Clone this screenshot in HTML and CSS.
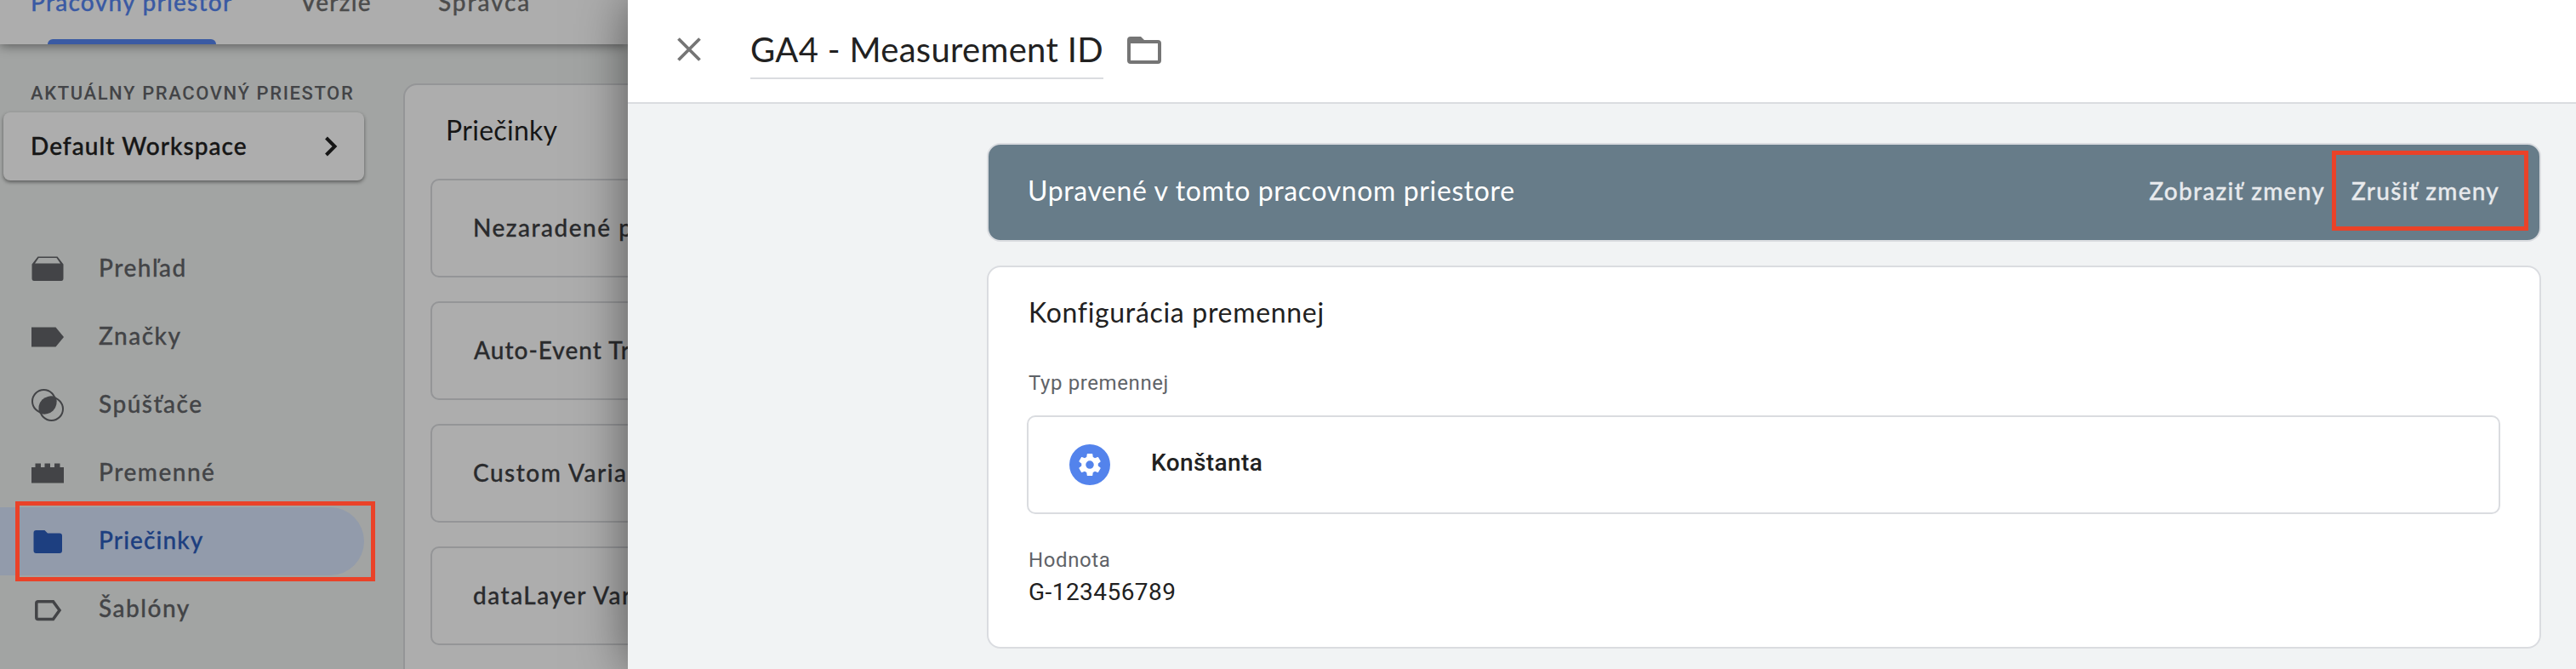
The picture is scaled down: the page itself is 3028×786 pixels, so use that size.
FILE: index.html
```html
<!DOCTYPE html>
<html lang="sk">
<head>
<meta charset="utf-8">
<title>GA4 - Measurement ID</title>
<link rel="stylesheet" href="styles.css">
</head>
<body>
<div class="app">
  <header class="tabs">
    <span class="tab tab-active">Pracovný priestor</span>
    <span class="tab">Verzie</span>
    <span class="tab tab-wide">Správca</span>
  </header>
  <div class="body">
    <aside class="side">
      <div class="side-label">AKTUÁLNY PRACOVNÝ PRIESTOR</div>
      <div class="workspace">
        <span>Default Workspace</span>
        <svg class="chevron" width="16" height="24" viewBox="0 0 16 24"><path d="M2.500 2 12.500 12 2.500 22" fill="none" stroke="#161616" stroke-width="4"/></svg>
      </div>
      <nav class="nav">
        <a class="nav-item"><svg class="nav-icon" viewBox="0 0 38 38"><path fill-rule="evenodd" d="M7.500 4.500H30.500L37.500 13.500V30Q37.500 33 35 33H3Q.5 33 .5 30V13.500ZM8.500 6 4 12.500H34L29.500 6Z"/></svg><span class="nav-text">Prehľad</span></a>
        <a class="nav-item"><svg class="nav-icon" viewBox="0 0 38 38"><path d="M0 7.500H28.500L38 19 28.500 30.500H0Z"/></svg><span class="nav-text">Značky</span></a>
        <a class="nav-item"><svg class="nav-icon" viewBox="0 0 38 38"><circle class="ring" cx="14.500" cy="14.500" r="13.500"/><circle class="ring" cx="23.500" cy="23.500" r="13.500"/><path d="M28.500 9.500A14.500 14.500 0 0 0 9.500 28.500A14.500 14.500 0 0 0 28.500 9.500Z"/></svg><span class="nav-text">Spúšťače</span></a>
        <a class="nav-item"><svg class="nav-icon" viewBox="0 0 38 38"><path d="M0 12H4.500V7.500H11V12H15.500V7.500H22V12H27V7.500H33.500V12H38V30.500H0Z"/></svg><span class="nav-text">Premenné</span></a>
        <a class="nav-item nav-active"><svg class="nav-icon" viewBox="0 0 38 38"><path d="M5.500 6H15.500L19 9.500H33Q36 9.500 36 12.500V30Q36 33 33 33H5.500Q2.500 33 2.500 30V9Q2.500 6 5.500 6Z"/></svg><span class="nav-text">Priečinky</span><span class="mark mark-nav"></span></a>
        <a class="nav-item"><svg class="nav-icon" viewBox="0 0 38 38"><path class="outline" d="M7.800 9.700H25.500L33 20 25.500 30.500H7.800Q5.800 30.500 5.800 28.500V11.700Q5.800 9.700 7.800 9.700Z"/></svg><span class="nav-text">Šablóny</span></a>
      </nav>
    </aside>
    <main class="folders">
      <h2 class="folders-title">Priečinky</h2>
      <div class="folder">Nezaradené položky</div>
      <div class="folder folder-snug">Auto-Event Tracking</div>
      <div class="folder">Custom Variables</div>
      <div class="folder">dataLayer Variables</div>
    </main>
  </div>
</div>
<section class="drawer">
  <header class="drawer-head">
    <svg class="close" width="28" height="28" viewBox="0 0 28 28"><path d="M1.500 1.500 26.500 26.500M26.500 1.500 1.500 26.500" stroke="#757575" stroke-width="3.800"/></svg>
    <div class="drawer-title">GA4 - Measurement ID</div>
    <svg class="folder-icon" width="40" height="32" viewBox="0 0 40 32"><path fill="#757575" fill-rule="evenodd" d="M4 0H16L20 4H36Q40 4 40 8V28Q40 32 36 32H4Q0 32 0 28V4Q0 0 4 0ZM4 8V28H36V8Z"/></svg>
  </header>
  <div class="drawer-body">
    <div class="banner">
      <span class="banner-text">Upravené v tomto pracovnom priestore</span>
      <span class="banner-link">Zobraziť zmeny</span>
      <span class="banner-link last">Zrušiť zmeny<span class="mark mark-cancel"></span></span>
    </div>
    <div class="card">
      <h3 class="card-title">Konfigurácia premennej</h3>
      <div class="field-label">Typ premennej</div>
      <div class="type-box">
        <svg class="gear" width="48" height="48" viewBox="0 0 48 48"><circle cx="24" cy="24" r="24" fill="#5383ec"/><path transform="translate(7.700 7.700) scale(1.360)" fill="#fff" d="M19.140 12.940c.04-.3.060-.61.060-.94 0-.32-.02-.64-.07-.94l2.030-1.580c.18-.14.230-.41.120-.61l-1.920-3.320c-.12-.22-.37-.29-.59-.22l-2.390.96c-.5-.38-1.030-.7-1.620-.94l-.36-2.540c-.04-.24-.24-.41-.48-.41h-3.840c-.24 0-.43.170-.47.410l-.36 2.540c-.59.240-1.130.570-1.620.940l-2.390-.96c-.22-.08-.47 0-.59.220L2.740 8.870c-.12.210-.08.470.120.610l2.030 1.580c-.05.300-.09.630-.09.940s.02.640.070.940l-2.030 1.580c-.18.140-.23.410-.12.610l1.920 3.320c.12.220.370.290.590.220l2.390-.96c.5.380 1.030.7 1.620.940l.36 2.540c.05.240.240.410.480.410h3.840c.24 0 .44-.17.470-.41l.36-2.540c.59-.24 1.130-.56 1.620-.94l2.390.96c.22.080.470 0 .59-.22l1.920-3.320c.12-.22.070-.47-.12-.61zM12 15.500a3.500 3.500 0 1 1 0-7 3.500 3.500 0 0 1 0 7z"/></svg>
        <span class="type-name">Konštanta</span>
      </div>
      <div class="field-label second">Hodnota</div>
      <div class="value">G-123456789</div>
    </div>
  </div>
</section>
</body>
</html>
```
FILE: styles.css
```css
* { box-sizing: border-box; }
body { margin: 0; width: 3028px; height: 786px; overflow: hidden; position: relative; font-family: Lato, "Open Sans", sans-serif; font-weight: 500; font-size: 28px; }
.app { width: 738px; height: 786px; overflow: hidden; background: #a2a4a3; display: flex; flex-direction: column; }
.tabs { height: 52px; flex: none; background: #adadad; display: flex; padding-left: 36px; position: relative; z-index: 1; box-shadow: 0 2px 12px rgba(0,0,0,.45); color: #4c4c4c; white-space: nowrap; letter-spacing: 1.250px; -webkit-text-stroke: .3px; }
.tab { height: 70px; margin-top: -18px; line-height: 40px; position: relative; }
.tab:nth-child(1) { width: 317px; }
.tab:nth-child(2) { width: 162px; }
.tab-wide { letter-spacing: 1.900px; }
.tab-active { color: #3a5aa3; }
.tab-active::after { content: ""; position: absolute; left: 20px; top: 64px; width: 198px; height: 6px; background: #3a5aa3; border-radius: 6px 6px 0 0; }
.body { flex: 1; display: flex; min-height: 0; }
.side { width: 474px; flex: none; padding-top: 45px; }
.side-label { height: 35px; padding-left: 36px; font: 500 22px/25px Roboto, sans-serif; letter-spacing: 1.600px; color: #434447; white-space: nowrap; }
.workspace { margin-left: 4px; width: 424px; height: 80px; padding: 0 31px 3px 32px; display: flex; align-items: center; justify-content: space-between; background: #adadad; border-radius: 8px; box-shadow: 0 2px 4px rgba(0,0,0,.45); color: #161616; white-space: nowrap; letter-spacing: 1.050px; -webkit-text-stroke: .4px; }
.chevron { margin-top: 3px; }
.nav { margin-top: 64px; }
.nav-item { height: 80px; width: 428px; padding-left: 37px; display: flex; align-items: center; color: #434447; position: relative; }
.nav-icon { width: 38px; height: 38px; margin-right: 41px; fill: #434447; }
.nav-text { padding-bottom: 4px; letter-spacing: 1.500px; -webkit-text-stroke: .3px; }
.ring { fill: none; stroke: #434447; stroke-width: 2; }
.outline { fill: none; stroke: #434447; stroke-width: 3.500; }
.nav-active { background: #929bab; color: #1d3f80; border-radius: 0 40px 40px 0; }
.nav-active .nav-icon { fill: #1d3f80; }
.nav-active .nav-text { letter-spacing: 1.100px; }
.mark { position: absolute; border: 5px solid #ea4228; }
.mark-nav { left: 18px; top: -7px; width: 423px; height: 94px; }
.folders { flex: none; width: 600px; margin-top: 46px; border: 2px solid #949597; border-radius: 16px 0 0 0; background: #adadad; padding: 33px 0 0 30px; height: 760px; }
.folders-title { margin: 0 0 37px 18px; font-size: 32px; line-height: 40px; font-weight: 400; letter-spacing: .300px; color: #161616; }
.folder { height: 116px; margin-bottom: 28px; border: 2px solid #949597; border-radius: 10px; padding: 0 0 3px 48px; display: flex; align-items: center; color: #2a2b2d; letter-spacing: 1.500px; white-space: nowrap; -webkit-text-stroke: .3px; }
.folder-snug { padding-left: 49px; letter-spacing: 1px; }
.drawer { position: absolute; left: 738px; top: 0; width: 2290px; height: 786px; background: #f1f3f4; box-shadow: 0 0 56px rgba(0,0,0,.5); z-index: 2; }
.drawer-head { height: 122px; background: #fff; border-bottom: 2px solid #dadce0; display: flex; padding-left: 58px; }
.close { margin-top: 44px; }
.drawer-title { margin: 33px 28px 0 58px; width: 415px; height: 60px; line-height: 50px; font-size: 40px; font-weight: 400; letter-spacing: .300px; color: #212121; border-bottom: 2px solid #dadce0; white-space: nowrap; }
.folder-icon { margin-top: 43px; }
.drawer-body { padding: 46px 41px 0 422px; }
.banner { height: 116px; border: 2px solid #dadce0; border-radius: 16px; background: #677c89; display: flex; align-items: center; padding: 0 50px 6px 46px; color: #fff; }
.banner-text { flex: 1; font-size: 32px; font-weight: 400; letter-spacing: .610px; }
.banner-link { color: #e8eaed; position: relative; padding-top: 2px; margin-right: 31px; white-space: nowrap; letter-spacing: 1.250px; -webkit-text-stroke: .3px; }
.last { margin-right: 0; width: 171px; }
.mark-cancel { left: -23px; top: -28px; width: 231px; height: 94px; }
.card { margin-top: 28px; height: 450px; border: 2px solid #dadce0; border-radius: 16px; background: #fff; padding: 33px 46px 0 45px; color: #212121; }
.card-title { margin: 0 0 48px 2px; font-size: 32px; line-height: 40px; font-weight: 400; letter-spacing: .680px; }
.field-label { padding-left: 2px; font: 400 24px/30px Roboto, sans-serif; letter-spacing: .600px; color: #5f6368; }
.type-box { margin-top: 23px; height: 116px; border: 2px solid #dadce0; border-radius: 10px; display: flex; align-items: center; padding-left: 48px; }
.type-name { margin-left: 48px; padding-bottom: 5px; font: 500 28px/34px Roboto, sans-serif; letter-spacing: .400px; }
.second { margin-top: 39px; }
.value { padding: 5px 0 0 2px; font: 400 28px/36px Roboto, sans-serif; letter-spacing: .450px; }
```
